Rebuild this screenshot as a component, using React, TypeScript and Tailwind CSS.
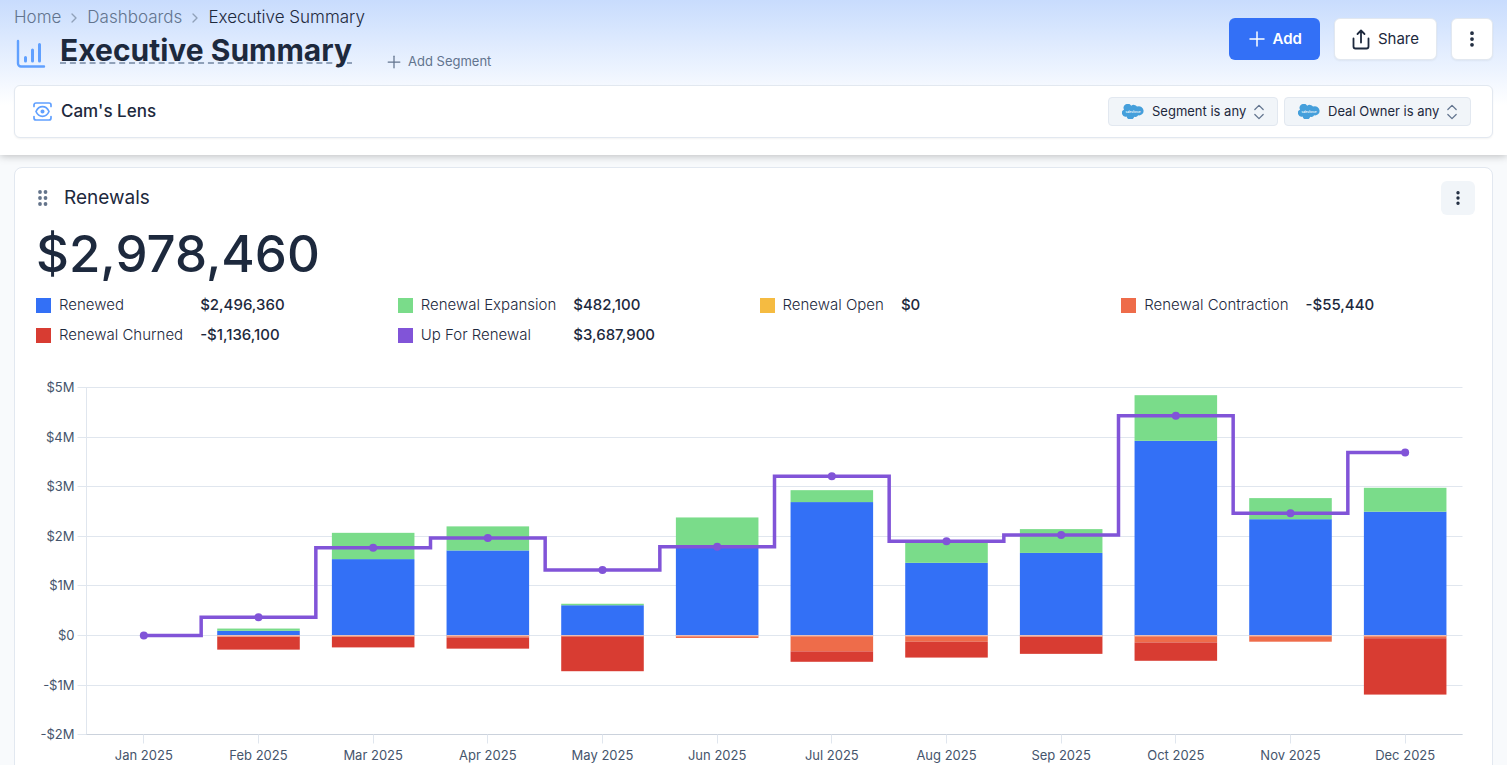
import React, { useEffect, useRef, useState } from 'react';
import { ChevronRight, ChevronsUpDown, EllipsisVertical, Plus } from 'lucide-react';

type Month = {
  label: string;
  renewed: number;
  expansion: number;
  contraction: number;
  churned: number;
  upForRenewal: number;
};

// all amounts in millions
const months: Month[] = [
  { label: 'Jan 2025', renewed: 0, expansion: 0, contraction: 0, churned: 0, upForRenewal: 0 },
  { label: 'Feb 2025', renewed: 0.095, expansion: 0.045, contraction: 0.02, churned: 0.265, upForRenewal: 0.37 },
  { label: 'Mar 2025', renewed: 1.54, expansion: 0.53, contraction: 0.03, churned: 0.21, upForRenewal: 1.77 },
  { label: 'Apr 2025', renewed: 1.715, expansion: 0.485, contraction: 0.04, churned: 0.225, upForRenewal: 1.965 },
  { label: 'May 2025', renewed: 0.61, expansion: 0.03, contraction: 0.01, churned: 0.71, upForRenewal: 1.32 },
  { label: 'Jun 2025', renewed: 1.765, expansion: 0.615, contraction: 0.05, churned: 0, upForRenewal: 1.79 },
  { label: 'Jul 2025', renewed: 2.69, expansion: 0.24, contraction: 0.32, churned: 0.21, upForRenewal: 3.21 },
  { label: 'Aug 2025', renewed: 1.465, expansion: 0.435, contraction: 0.125, churned: 0.32, upForRenewal: 1.9 },
  { label: 'Sep 2025', renewed: 1.665, expansion: 0.48, contraction: 0.02, churned: 0.35, upForRenewal: 2.025 },
  { label: 'Oct 2025', renewed: 3.925, expansion: 0.92, contraction: 0.14, churned: 0.37, upForRenewal: 4.43 },
  { label: 'Nov 2025', renewed: 2.345, expansion: 0.425, contraction: 0.125, churned: 0, upForRenewal: 2.465 },
  { label: 'Dec 2025', renewed: 2.496, expansion: 0.482, contraction: 0.055, churned: 1.136, upForRenewal: 3.688 },
];

const legend = [
  [
    { label: 'Renewed', value: '$2,496,360', color: 'bg-[#3370f6]' },
    { label: 'Renewal Churned', value: '-$1,136,100', color: 'bg-[#d83c32]' },
  ],
  [
    { label: 'Renewal Expansion', value: '$482,100', color: 'bg-[#7adc8a]' },
    { label: 'Up For Renewal', value: '$3,687,900', color: 'bg-[#8154d8]' },
  ],
  [{ label: 'Renewal Open', value: '$0', color: 'bg-[#f5bb41]' }],
  [{ label: 'Renewal Contraction', value: '-$55,440', color: 'bg-[#ee6c4a]' }],
];

const TICKS = [5, 4, 3, 2, 1, 0, -1, -2];
const CHART = { height: 392, top: 15, left: 50, right: 9, unit: 49.6 };

const tickLabel = (t: number) => (t === 0 ? '$0' : `${t < 0 ? '-' : ''}$${Math.abs(t)}M`);

const RenewalsChart: React.FC = () => {
  const ref = useRef<HTMLDivElement>(null);
  const [width, setWidth] = useState(1435);

  useEffect(() => {
    if (!ref.current) return;
    const ro = new ResizeObserver(([entry]) => setWidth(entry.contentRect.width));
    ro.observe(ref.current);
    return () => ro.disconnect();
  }, []);

  const x0 = CHART.left + 0.5;
  const x1 = width - CHART.right + 0.5;
  const band = (x1 - x0) / months.length;
  const barWidth = band * 0.72;
  const y = (v: number) => CHART.top + 0.5 + (5 - v) * CHART.unit;
  const gridY = (v: number) => Math.floor(y(v)) + 0.5;
  const bottom = gridY(-2);

  // step-middle line through the month centres
  let line = '';
  months.forEach((m, i) => {
    const cx = x0 + band * (i + 0.5);
    line += i === 0 ? `M${cx} ${y(m.upForRenewal)}` : `H${cx - band / 2}V${y(m.upForRenewal)}`;
    if (i === months.length - 1) line += `H${cx}`;
  });

  return (
    <div ref={ref} className="w-full">
      <svg width="100%" height={CHART.height} role="img" aria-label="Renewals by month" className="block">
        {TICKS.map((t) => (
          <g key={t}>
            <line x1={x0 - 9} x2={x1} y1={gridY(t)} y2={gridY(t)} stroke="#e0e6ee" />
            <text x={x0 - 12} y={gridY(t) + 4} textAnchor="end" className="fill-slate-600 text-[13px]">
              {tickLabel(t)}
            </text>
          </g>
        ))}
        <line x1={x0} x2={x0} y1={gridY(5)} y2={bottom} stroke="#e0e6ee" />
        <line x1={x0} x2={x1} y1={bottom} y2={bottom} stroke="#cbd2dc" />

        {months.map((m, i) => {
          const cx = x0 + band * (i + 0.5);
          const bx = cx - barWidth / 2;
          const k = CHART.unit;
          return (
            <g key={m.label}>
              <line x1={Math.floor(cx) + 0.5} x2={Math.floor(cx) + 0.5} y1={bottom} y2={bottom + 9} stroke="#e0e6ee" />
              <text x={cx} y={bottom + 25} textAnchor="middle" className="fill-slate-600 text-[13px]">
                {m.label}
              </text>
              <rect x={bx} y={y(m.renewed)} width={barWidth} height={m.renewed * k} fill="#3370f6" />
              <rect x={bx} y={y(m.renewed + m.expansion)} width={barWidth} height={m.expansion * k} fill="#7adc8a" />
              <rect x={bx} y={y(0)} width={barWidth} height={m.contraction * k} fill="#ee6c4a" />
              <rect x={bx} y={y(-m.contraction)} width={barWidth} height={m.churned * k} fill="#d83c32" />
              {m.renewed > 0 && <rect x={bx} y={y(0) - 0.5} width={barWidth} height={1.5} fill="#f3c9bd" fillOpacity={0.8} />}
            </g>
          );
        })}

        <path d={line} fill="none" stroke="#8154d8" strokeWidth={3.5} />
        {months.map((m, i) => (
          <circle key={m.label} cx={x0 + band * (i + 0.5)} cy={y(m.upForRenewal)} r={4} fill="#8154d8" />
        ))}
      </svg>
    </div>
  );
};

const ChartIcon = () => (
  <svg width="30" height="30" viewBox="0 0 30 30" fill="none" stroke="#60a0ff" strokeWidth="2.4" strokeLinecap="round">
    <path d="M2 2v22.5a3 3 0 0 0 3 3h23" />
    <path d="M9.5 18.5v3.5M16.5 11v11M23.5 5.500v16.5" strokeWidth="3" />
  </svg>
);

const LensIcon = () => (
  <svg width="19" height="19" viewBox="0 0 19 19" fill="none" stroke="#60a0ff" strokeWidth="1.7" strokeLinecap="round" strokeLinejoin="round">
    <path d="M1 4.5V3a2 2 0 0 1 2-2h13a2 2 0 0 1 2 2v1.5M1 14.5V16a2 2 0 0 0 2 2h13a2 2 0 0 0 2-2v-1.5" />
    <path d="M3 9.5C4.5 6.2 6.8 4.7 9.5 4.7s5 1.5 6.5 4.8c-1.5 3.3-3.8 4.8-6.5 4.8S4.500 12.8 3 9.5Z" />
    <circle cx="9.5" cy="9.5" r="1.2" fill="#60a0ff" />
  </svg>
);

const ShareIcon = () => (
  <svg width="18" height="21" viewBox="0 0 18 21" fill="none" stroke="currentColor" strokeWidth="1.8" strokeLinecap="round" strokeLinejoin="round">
    <path d="M1.5 9.5v8a2 2 0 0 0 2 2h11a2 2 0 0 0 2-2v-8" />
    <path d="M9 13.500V1.5M5.500 5 9 1.5 12.500 5" />
  </svg>
);

const SalesforceIcon = () => (
  <svg width="22" height="15" viewBox="0 0 22 15" aria-hidden="true">
    <path
      d="M9.2 1.8A3.9 3.9 0 0 1 15 2.600a4.7 4.7 0 0 1 6.6 4.2 4.5 4.5 0 0 1-5.4 4.5 3.4 3.4 0 0 1-4 1.4 3.900 3.900 0 0 1-7.6-.3A3.6 3.6 0 0 1 2 5.7 4.1 4.1 0 0 1 9.2 1.8Z"
      fill="#459fdb"
    />
    <text x="11" y="8.5" textAnchor="middle" fill="#fff" className="text-[3px] font-medium">
      salesforce
    </text>
  </svg>
);

const DragHandle = () => (
  <svg width="10" height="16" viewBox="0 0 10 16" fill="#64748b">
    {[2, 8, 14].map((cy) => (
      <g key={cy}>
        <circle cx="2" cy={cy} r="1.9" />
        <circle cx="7.5" cy={cy} r="1.9" />
      </g>
    ))}
  </svg>
);

const FilterSelect: React.FC<{ label: string }> = ({ label }) => (
  <label className="flex h-[29px] items-center rounded border border-slate-200 bg-slate-100 pl-[13px] pr-2">
    <SalesforceIcon />
    <select aria-label={label} className="ml-2 mr-0.5 appearance-none bg-transparent text-[13px] text-slate-800 outline-none">
      <option>{label} is any</option>
    </select>
    <ChevronsUpDown size={20} strokeWidth={1.5} className="text-slate-500" />
  </label>
);

const App: React.FC = () => {
  return (
    <div className="flex h-screen flex-col bg-slate-50 font-['Inter',sans-serif] text-slate-800">
      <header className="relative z-10 bg-white bg-linear-to-b from-[#c8dcfd] to-white to-[105px] px-3.5 pb-[17px] pt-2 shadow-[0_1px_8px_rgba(0,0,0,0.25)]">
        <div className="flex items-start justify-between">
          <div>
            <nav className="flex h-5 items-center gap-[5px] text-[17px] font-light">
              <a href="#home" className="text-slate-500">Home</a>
              <ChevronRight size={16} className="text-slate-400" />
              <a href="#dashboards" className="text-slate-500">Dashboards</a>
              <ChevronRight size={16} className="text-slate-400" />
              <span>Executive Summary</span>
            </nav>
            <div className="mt-1 flex h-11 items-start">
              <div className="ml-0.5 mr-3.5 mt-[7px]">
                <ChartIcon />
              </div>
              <h1 className="text-[30px] font-bold leading-9 underline decoration-slate-400 decoration-dashed decoration-2 underline-offset-1">
                Executive Summary
              </h1>
              <button className="ml-8 mt-5 flex items-center gap-1 text-[13px] text-slate-500">
                <Plus size={20} strokeWidth={1.5} />
                Add Segment
              </button>
            </div>
          </div>
          <div className="mt-2.5 flex gap-3.5">
            <button className="flex h-[42px] items-center gap-1 rounded-md bg-[#3370f6] pl-4 pr-[18px] text-[15px] font-semibold text-white">
              <Plus size={24} strokeWidth={1.5} />
              Add
            </button>
            <button className="flex h-[42px] items-center gap-2 rounded-md border border-slate-200 bg-white px-[17px] text-[15px] shadow-xs">
              <ShareIcon />
              Share
            </button>
            <button aria-label="More options" className="flex size-[42px] items-center justify-center rounded-md border border-slate-200 bg-white shadow-xs">
              <EllipsisVertical size={20} strokeWidth={2.5} />
            </button>
          </div>
        </div>

        <div className="mt-[9px] flex h-[53px] items-center justify-between rounded-md border border-slate-200 bg-white pl-[18px] pr-[21px] shadow-xs">
          <div className="flex items-center gap-[9px]">
            <LensIcon />
            <span className="text-[17px] font-medium">Cam's Lens</span>
          </div>
          <div className="flex gap-1.5">
            <FilterSelect label="Segment" />
            <FilterSelect label="Deal Owner" />
          </div>
        </div>
      </header>

      <main className="flex-1 overflow-y-auto px-3.5 py-3 [scrollbar-width:none]">
        <section className="rounded-lg border border-slate-200 bg-white pb-4 pl-[21px]">
          <div className="flex h-[60px] items-center justify-between pr-[17px]">
            <div className="flex items-center gap-4 pl-0.5">
              <DragHandle />
              <h2 className="text-[19px]">Renewals</h2>
            </div>
            <button aria-label="Renewals options" className="flex size-[34px] items-center justify-center rounded-md bg-slate-100">
              <EllipsisVertical size={18} strokeWidth={2.5} />
            </button>
          </div>
          <p className="text-[51px] font-medium leading-[52px]">$2,978,460</p>

          <div className="mt-2.5 grid grid-cols-4 pr-[9px] text-[15px]">
            {legend.map((column, i) => (
              <dl key={i} className="grid auto-rows-[30px] grid-cols-[max-content_max-content] content-start items-center gap-x-[17px]">
                {column.map((item) => (
                  <React.Fragment key={item.label}>
                    <dt className="flex items-center gap-2 font-light">
                      <span className={`size-[15px] ${item.color}`} />
                      {item.label}
                    </dt>
                    <dd className="font-medium">{item.value}</dd>
                  </React.Fragment>
                ))}
              </dl>
            ))}
          </div>

          <div className="mt-[22px] pr-[21px]">
            <RenewalsChart />
          </div>
        </section>
      </main>
    </div>
  );
};

export default App;
